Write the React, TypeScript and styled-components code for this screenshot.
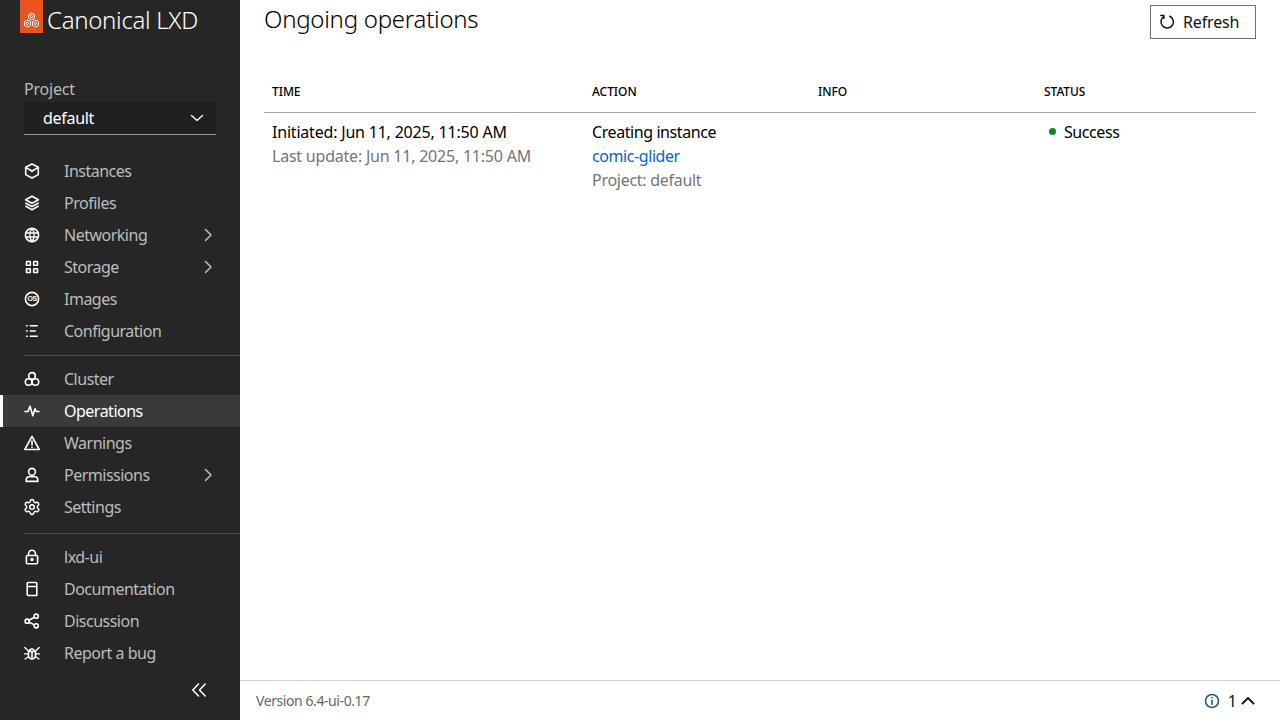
import React from "react";
import styled, { createGlobalStyle } from "styled-components";
import { Settings } from "lucide-react";

const Global = createGlobalStyle`
  html, body { margin: 0; padding: 0; height: 100%; }
  body { font-family: "Noto Sans", "Open Sans", sans-serif; background: #fff; color: #000; overflow: hidden; }
  #root { height: 100%; }
  * { box-sizing: border-box; }
`;

const Shell = styled.div`
  display: flex;
  width: 1280px;
  height: 720px;
`;
const Sidebar = styled.aside`
  width: 240px;
  flex: none;
  background: #262626;
  display: flex;
  flex-direction: column;
  color: #fff;
`;
const Brand = styled.div`
  display: flex;
  height: 33px;
  padding-left: 20px;
  align-items: center;
  gap: 4px;
`;
const LogoTile = styled.div`
  width: 23px;
  height: 33px;
  background: #e95420;
  display: flex;
  align-items: flex-end;
  justify-content: center;
  padding-bottom: 4px;
  color: #fff;
`;
const BrandName = styled.span`
  font-size: 24px;
  font-weight: 300;
  letter-spacing: -0.3px;
  color: #fff;
  line-height: 33px;
  position: relative;
  top: 3px;
`;
const ProjectBlock = styled.div`
  padding: 44px 24px 0;
`;
const ProjectLabel = styled.div`
  font-size: 16px;
  line-height: 24px;
  height: 24px;
  letter-spacing: -0.2px;
  color: #bbb;
`;
const ProjectSelect = styled.div`
  height: 33px;
  margin-top: 1px;
  background: #202020;
  border-bottom: 1px solid #999;
  display: flex;
  align-items: center;
  justify-content: space-between;
  padding: 0 11px 0 19px;
  font-size: 16px;
  letter-spacing: -0.3px;
  color: #fff;
`;
const NavGroup = styled.nav<{ $top: number }>`
  margin-top: ${(p) => p.$top}px;
  display: flex;
  flex-direction: column;
`;
const NavRow = styled.a<{ $active?: boolean }>`
  height: 32px;
  display: flex;
  align-items: center;
  padding-left: ${(p) => (p.$active ? 21 : 24)}px;
  padding-right: 24px;
  font-size: 16px;
  letter-spacing: -0.5px;
  color: ${(p) => (p.$active ? "#fff" : "#bdbdbd")};
  background: ${(p) => (p.$active ? "#3a3a3a" : "transparent")};
  border-left: ${(p) => (p.$active ? "3px solid #fff" : "none")};
`;
const IconSlot = styled.span`
  width: 40px;
  flex: none;
  display: flex;
  align-items: center;
  color: #fff;
`;
const GearSlot = styled.span`
  display: flex;
  margin-left: -1px;
`;
const NavText = styled.span`
  flex: 1;
`;
const Rule = styled.hr<{ $top: number }>`
  border: 0;
  height: 1px;
  background: #4d4d4d;
  margin: ${(p) => p.$top}px 0 7px 24px;
`;
const Collapse = styled.div`
  margin-top: 13px;
  padding-right: 33px;
  display: flex;
  justify-content: flex-end;
  color: #fff;
`;
const Main = styled.main`
  flex: 1;
  min-width: 0;
  display: flex;
  flex-direction: column;
`;
const Content = styled.div`
  flex: 1;
  padding: 5px 24px 0;
`;
const TitleBar = styled.header`
  display: flex;
  justify-content: space-between;
  align-items: flex-start;
  height: 68px;
`;
const Title = styled.h1`
  margin: 0;
  font-size: 24px;
  font-weight: 300;
  line-height: 28px;
  letter-spacing: -0.25px;
  color: #000;
`;
const RefreshButton = styled.button`
  width: 106px;
  height: 34px;
  border: 1px solid #707070;
  background: #fff;
  display: flex;
  align-items: center;
  justify-content: flex-start;
  gap: 8px;
  font: inherit;
  font-size: 16px;
  letter-spacing: -0.15px;
  color: #111;
  padding: 0 0 0 8px;
`;
const Table = styled.table`
  width: 992px;
  border-collapse: collapse;
  table-layout: fixed;
`;
const Head = styled.th<{ $w: number }>`
  width: ${(p) => p.$w}px;
  height: 39px;
  padding: 0 8px 2px;
  text-align: left;
  font-size: 12px;
  font-weight: 500;
  letter-spacing: -0.05px;
  text-transform: uppercase;
  border-bottom: 1px solid #a6a6a6;
  color: #000;
`;
const Cell = styled.td<{ $tight?: boolean }>`
  padding: 7px 8px 0;
  vertical-align: top;
  font-size: 16px;
  line-height: 24px;
  letter-spacing: ${(p) => (p.$tight ? -0.2 : -0.42)}px;
`;
const Muted = styled.div<{ $spacing: number }>`
  color: #757575;
  letter-spacing: ${(p) => p.$spacing}px;
`;
const Link = styled.a`
  display: block;
  color: #0b64c8;
`;
const StatusWrap = styled.div`
  display: flex;
  align-items: center;
  padding-left: 5px;
  gap: 8px;
`;
const Dot = styled.i`
  width: 7px;
  height: 7px;
  border-radius: 50%;
  background: #0e8420;
`;
const Footer = styled.footer`
  height: 40px;
  border-top: 1px solid #d0d0d0;
  display: flex;
  align-items: center;
  justify-content: space-between;
  padding: 0 24px 0 16px;
`;
const Version = styled.span`
  font-size: 14px;
  letter-spacing: -0.42px;
  color: #666;
`;
const Notice = styled.div`
  display: flex;
  align-items: center;
  font-size: 16px;
  gap: 3px;
  color: #111;
`;
const NoticeInfo = styled.span`
  display: flex;
  color: #24598f;
  margin-right: 5px;
`;

type P = { children: React.ReactNode; size?: number; weight?: number };
const Svg = ({ children, size = 16, weight = 1.6 }: P) => (
  <svg width={size} height={size} viewBox="0 0 16 16" fill="none" stroke="currentColor" strokeWidth={weight} strokeLinecap="round" strokeLinejoin="round">
    {children}
  </svg>
);

const Chevron = () => (
  <Svg weight={1.5}><path d="M5.5 2.5 11 8l-5.5 5.5" /></Svg>
);
const ChevronDown = () => (
  <Svg weight={1.3}><path d="M2.5 5.5 8 10.5l5.5-5" /></Svg>
);

const icons: Record<string, React.ReactNode> = {
  instances: <Svg><path d="M8 1 14.3 4.3v7.3L8 15 1.7 11.6V4.3z" /><path d="M1.9 4.6 8 8l6.1-3.4M8 8v.8" /></Svg>,
  profiles: <Svg><path d="M8 1.3 14.4 4.8 8 8.2 1.6 4.8z" /><path d="M1.8 8.2 8 11.5l6.2-3.3M1.8 11.3 8 14.7l6.2-3.4" /></Svg>,
  networking: <Svg><circle cx="8" cy="8" r="6.6" /><path d="M1.5 6h13M1.5 10h13M8 1.5c-3 3.5-3 9.5 0 13M8 1.5c3 3.5 3 9.5 0 13" strokeWidth="1.3" /></Svg>,
  storage: <Svg><rect x="2.5" y="2.5" width="3.8" height="3.8" rx=".4" /><rect x="9.7" y="2.5" width="3.8" height="3.8" rx=".4" /><rect x="2.5" y="9.7" width="3.8" height="3.8" rx=".4" /><rect x="9.7" y="9.7" width="3.8" height="3.8" rx=".4" /></Svg>,
  images: <Svg><circle cx="8" cy="8" r="6.6" /><text x="8" y="10.4" textAnchor="middle" fontSize="7" fontWeight="700" fill="currentColor" stroke="none" fontFamily="Liberation Sans, sans-serif">OS</text></Svg>,
  configuration: <Svg><path d="M2.6 2.8h.5M2.6 8h.5M2.6 13.2h.5M6.3 2.8h6.9M6.3 8h5M6.3 13.2h6.9" /></Svg>,
  cluster: <Svg><circle cx="8" cy="4.9" r="3.3" /><circle cx="4.6" cy="11" r="3.3" /><circle cx="11.4" cy="11" r="3.3" /></Svg>,
  operations: <Svg><path d="M1 8.5h3L6 3.3l2.8 9.4 2.2-7 1.2 2.8h2.8" /></Svg>,
  warnings: <Svg><path d="M8 1.3 15.2 14.5H.8z" /><path d="M8 6v4M8 12.2v.2" /></Svg>,
  permissions: <Svg><circle cx="8" cy="4.8" r="3.4" /><path d="M2.2 14.4v-1.6c0-1.8 1.4-3 3-3h5.6c1.6 0 3 1.2 3 3v1.6z" /></Svg>,
  lock: <Svg><rect x="2.4" y="6.5" width="11.2" height="8.3" rx="1" /><path d="M4.6 6.5V4.6a3.4 3.4 0 0 1 6.8 0v1.9" /><circle cx="8" cy="10.5" r="1" fill="currentColor" /></Svg>,
  docs: <Svg><path d="M3.2 2.5c0-.6.4-1 1-1h7.6c.6 0 1 .4 1 1v12H4.2c-.6 0-1-.4-1-1z" /><path d="M3.4 5.5h9.2" /></Svg>,
  share: <Svg><circle cx="12.2" cy="3.2" r="2.1" /><circle cx="3.2" cy="8.2" r="2.1" /><circle cx="12.2" cy="12.8" r="2.1" /><path d="M10.4 4.2 5 7.2M5 9.2l5.4 2.7" /></Svg>,
  bug: <Svg><path d="M4.5 6.5h7v4a3.5 3.5 0 0 1-7 0zM5.5 6.5a2.5 2.5 0 0 1 5 0M8 7v7" /><path d="M.8 2.5 4.5 6M15.2 2.5 11.5 6M.5 8.8h4M11.5 8.8h4M1 14l3.8-2.5M15 14l-3.8-2.5" strokeWidth="1.3" /></Svg>,
  settings: <GearSlot><Settings size={18} strokeWidth={2} /></GearSlot>,
};

const Item = ({ icon, label, more, active }: { icon: string; label: string; more?: boolean; active?: boolean }) => (
  <NavRow $active={active}>
    <IconSlot>{icons[icon]}</IconSlot>
    <NavText>{label}</NavText>
    {more && <Chevron />}
  </NavRow>
);

export default function App() {
  return (
    <Shell>
      <Global />
      <Sidebar>
        <Brand>
          <LogoTile>
            <svg width="17" height="17" viewBox="0 0 17 17" fill="none" stroke="currentColor" strokeWidth="1">
              <path d="M8.5 1 11.5 2.7v3.4L8.5 8 5.5 6.1V2.7z" />
              <circle cx="8.5" cy="4.5" r="1.1" />
              <path d="M4.5 8 7.5 9.7v3.6L4.5 15.2 1.5 13.3V9.7zM12.5 8l3 1.7v3.6l-3 1.9-3-1.9V9.7z" />
              <circle cx="4.5" cy="11.5" r="1.1" />
              <circle cx="12.5" cy="11.5" r="1.1" />
            </svg>
          </LogoTile>
          <BrandName>Canonical LXD</BrandName>
        </Brand>
        <ProjectBlock>
          <ProjectLabel>Project</ProjectLabel>
          <ProjectSelect>
            default
            <ChevronDown />
          </ProjectSelect>
        </ProjectBlock>
        <NavGroup $top={20}>
          <Item icon="instances" label="Instances" />
          <Item icon="profiles" label="Profiles" />
          <Item icon="networking" label="Networking" more />
          <Item icon="storage" label="Storage" more />
          <Item icon="images" label="Images" />
          <Item icon="configuration" label="Configuration" />
        </NavGroup>
        <Rule $top={8} />
        <NavGroup $top={0}>
          <Item icon="cluster" label="Cluster" />
          <Item icon="operations" label="Operations" active />
          <Item icon="warnings" label="Warnings" />
          <Item icon="permissions" label="Permissions" more />
          <Item icon="settings" label="Settings" />
        </NavGroup>
        <Rule $top={10} />
        <NavGroup $top={0}>
          <Item icon="lock" label="lxd-ui" />
          <Item icon="docs" label="Documentation" />
          <Item icon="share" label="Discussion" />
          <Item icon="bug" label="Report a bug" />
        </NavGroup>
        <Collapse>
          <Svg weight={1.5}><path d="M7.5 2 1.8 8l5.7 6M14.2 2 8.5 8l5.7 6" /></Svg>
        </Collapse>
      </Sidebar>
      <Main>
        <Content>
          <TitleBar>
            <Title>Ongoing operations</Title>
            <RefreshButton>
              <Svg weight={1.5}><path d="M10.8 2.2A6.2 6.2 0 1 1 4.3 3" /><path d="M1.8 1.6h3.1v3" /></Svg>
              Refresh
            </RefreshButton>
          </TitleBar>
          <Table>
            <thead>
              <tr>
                <Head $w={320}>Time</Head>
                <Head $w={226}>Action</Head>
                <Head $w={226}>Info</Head>
                <Head $w={220}>Status</Head>
              </tr>
            </thead>
            <tbody>
              <tr>
                <Cell $tight>
                  <div>Initiated: Jun 11, 2025, 11:50 AM</div>
                  <Muted $spacing={-0.22}>Last update: Jun 11, 2025, 11:50 AM</Muted>
                </Cell>
                <Cell>
                  <div>Creating instance</div>
                  <Link>comic-glider</Link>
                  <Muted $spacing={-0.28}>Project: default</Muted>
                </Cell>
                <Cell />
                <Cell>
                  <StatusWrap><Dot />Success</StatusWrap>
                </Cell>
              </tr>
            </tbody>
          </Table>
        </Content>
        <Footer>
          <Version>Version 6.4-ui-0.17</Version>
          <Notice>
            <NoticeInfo>
              <Svg><circle cx="8" cy="8" r="6.5" /><path d="M8 7.2v4M8 4.6v.2" /></Svg>
            </NoticeInfo>
            <span>1</span>
            <Svg weight={1.8}><path d="M2.5 10.5 8 5l5.5 5.5" /></Svg>
          </Notice>
        </Footer>
      </Main>
    </Shell>
  );
}
